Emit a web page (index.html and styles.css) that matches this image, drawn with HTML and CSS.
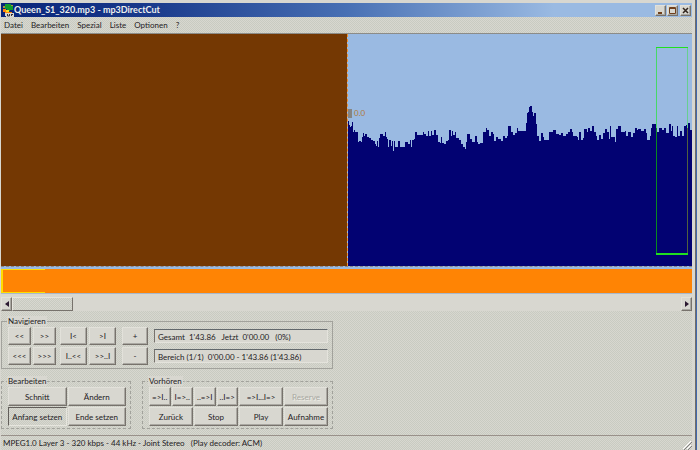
FILE: index.html
```html
<!DOCTYPE html>
<html lang="de">
<head>
<meta charset="utf-8">
<title>Queen_S1_320.mp3 - mp3DirectCut</title>
<link rel="stylesheet" href="styles.css">
</head>
<body>
<main class="window">
  <header class="titlebar">
    <svg class="app-icon" viewBox="0 0 12 13" aria-hidden="true">
      <path fill="#a89838" d="M1 2h2v2H1zM8 1h3v2H8z"/>
      <path fill="#119a2c" d="M3 0h6v2h2v4H8v1H5V5H3z"/>
      <path fill="#ff8410" d="M1 5h3v1h3v2h3v2H6V9H3V8H1z"/>
      <path fill="#f5e020" d="M4 6h3v2H4z"/>
      <path fill="#d6d6d0" d="M3 9h9v4H4v-1H3z"/>
      <path stroke="#303040" fill="none" d="M5.500 10v2h2v-2M9 10.500h2M9.500 10v2"/>
    </svg>
    <h1 class="title">Queen_S1_320.mp3 - mp3DirectCut</h1>
    <div class="caption">
      <button class="cap" aria-label="Minimieren"><svg viewBox="0 0 9 9"><path fill="#70401c" d="M2 6h4v2H2z"/></svg></button>
      <button class="cap" aria-label="Maximieren"><svg viewBox="0 0 9 9"><path fill="none" stroke="#70401c" d="M1.500 1.500h6v6h-6zM1 2.500h7"/></svg></button>
      <button class="cap close" aria-label="Schließen"><svg viewBox="0 0 9 9"><path fill="none" stroke="#30241c" stroke-width="1.500" d="M2 2l5 5M7 2l-5 5"/></svg></button>
    </div>
  </header>
  <nav class="menu">
    <a href="#">Datei</a><a href="#">Bearbeiten</a><a href="#">Spezial</a><a href="#">Liste</a><a href="#">Optionen</a><a href="#">?</a>
  </nav>
  <section class="wave">
    <div class="before"></div>
    <div class="after">
      <svg class="graph" viewBox="24 -168 1032 696" preserveAspectRatio="none" aria-hidden="true">
        <path d="M24 528V92H27V104H30V110H33V107H36V97H39V125H42V120H45V125H54V155H57V152H63V155H66V140H69V128H72V137H75V133H81V140H87V143H93V150H99V152H105V163H108V168H111V154H114V170H117V145H120V133H129V137H134V126H138V140H142V147H145V170H148V150H154V168H157V152H159V184H163V153H166V172H175V154H180V170H188V172H194V155H205V163H209V150H212V172H215V150H222V148H224V126H231V134H240V136H248V125H252V132H258V137H264V124H267V137H273V123H277V134H283V120H288V134H294V155H300V158H304V140H307V158H313V162H317V152H325V150H328V121H333V137H336V123H339V134H345V127H348V145H357V150H363V163H368V171H374V178H378V155H382V133H390V146H397V157H405V138H411V157H415V163H420V160H428V173H430V127H438V115H441V121H447V137H453V125H458V133H463V152H468V140H475V148H482V153H488V138H496V145H501V138H505V107H513V528Z"/>
        <path transform="translate(510)" d="M0 528V108H3V126H9V134H16V128H21V114H24V123H48V98H51V70H54V65H57V52H61V49H65V65H69V78H73V70H78V102H81V137H87V154H93V128H98V142H103V150H117V126H129V120H138V132H148V134H154V128H158V137H168V133H174V125H180V116H186V125H190V137H200V142H205V150H208V126H213V150H219V145H221V118H230V125H235V114H240V122H246V109H252V125H258V137H262V150H268V134H272V148H279V130H286V118H292V125H296V148H300V107H304V140H315V157H318V118H325V108H333V126H345V122H348V138H355V125H363V142H369V128H374V115H380V120H385V117H392V122H402V116H407V128H412V150H419V137H422V115H427V103H438V126H447V115H456V120H461V115H467V128H475V130H478V102H482V122H486V107H490V137H496V142H501V108H504V137H510V123H517V137H522V107H529V104H534V98H540V120H546V528Z"/>
      </svg>
      <div class="marker"><i></i><span>0.0</span></div>
      <div class="zone"></div>
    </div>
  </section>
  <div class="divider"></div>
  <section class="overview"><div class="view"></div></section>
  <div class="scrollbar">
    <button class="arrow" aria-label="Nach links"><svg viewBox="0 0 4 6"><path d="M4 0v6L0 3z"/></svg></button>
    <div class="thumb"></div>
    <button class="arrow end" aria-label="Nach rechts"><svg viewBox="0 0 4 6"><path d="M0 0v6l4-3z"/></svg></button>
  </div>
  <section class="controls">
    <fieldset class="navigate">
      <legend>Navigieren</legend>
      <div class="keys">
        <button>&lt;&lt;</button><button>&gt;&gt;</button><button class="gap-s">I&lt;</button><button>&gt;I</button><button class="gap-m">+</button>
        <button>&lt;&lt;&lt;</button><button>&gt;&gt;&gt;</button><button class="gap-s">I..&lt;&lt;</button><button>&gt;&gt;..I</button><button class="gap-m">-</button>
      </div>
      <div class="readouts">
        <output>Gesamt&nbsp; 1'43.86&nbsp;&nbsp; Jetzt&nbsp; 0'00.00&nbsp;&nbsp; (0%)</output>
        <output>Bereich (1/1)&nbsp; 0'00.00 - 1'43.86 (1'43.86)</output>
      </div>
    </fieldset>
    <div class="groups">
      <fieldset class="edit">
        <legend>Bearbeiten</legend>
        <div class="pair">
          <button>Schnitt</button><button>Ändern</button>
          <button class="pressed">Anfang setzen</button><button>Ende setzen</button>
        </div>
      </fieldset>
      <fieldset class="preview">
        <legend>Vorhören</legend>
        <div class="play">
          <button>=&gt;I..</button><button>I=&gt;..</button><button>..=&gt;I</button><button>..I=&gt;</button><button class="wide">=&gt;I...I=&gt;</button><button class="wide" disabled>Reserve</button>
          <button class="wide">Zurück</button><button class="wide">Stop</button><button class="wide">Play</button><button class="wide">Aufnahme</button>
        </div>
      </fieldset>
    </div>
  </section>
  <footer class="status">
    <span>MPEG1.0 Layer 3 - 320 kbps - 44 kHz - Joint Stereo&nbsp;&nbsp; (Play decoder: ACM)</span>
    <svg class="grip" viewBox="0 0 9 9" aria-hidden="true"><path stroke="#fff" d="M0 8l8-8M4 8l4-4"/><path stroke="#808080" d="M1 9l8-8M5 9l4-4"/></svg>
  </footer>
</main>
<aside class="backdrop"></aside>
</body>
</html>
```
FILE: styles.css
```css
* { box-sizing: border-box; }

:root {
  --face: #d8d7d0;
  --dither: repeating-conic-gradient(#d8d7d0 0 25%, #c8cbc1 0 50%) 0 0 / 2px 2px;
  --sky: #9abae2;
  --navy: #020272;
}

body {
  margin: 0;
  min-height: 100vh;
  display: flex;
  background: var(--face);
  color: #24211e;
  font: 8px/10px Lato, "Liberation Sans", sans-serif;
}

button {
  display: flex;
  align-items: center;
  justify-content: center;
  min-width: 0;
  padding: 0;
  border: 1px solid;
  border-color: #e2e1da #77726c #77726c #e2e1da;
  box-shadow: inset -1px -1px #aaa8a2;
  background: var(--face);
  color: inherit;
  font: inherit;
  white-space: nowrap;
}

.window {
  flex: 1;
  min-width: 0;
  display: flex;
  flex-direction: column;
  padding: 3px 3px 0 1px;
}

.backdrop {
  width: 5px;
  border-left: 1px solid #706c68;
  background: linear-gradient(90deg, #4268ac 1px, #d8d7d0 1px);
}

.titlebar {
  display: flex;
  align-items: center;
  height: 14px;
  padding: 0 1px;
  background: linear-gradient(90deg, #08247a 0, #18388a 20%, #4870b4 50%, var(--sky) 80%);
}

.app-icon { width: 12px; height: 13px; }

.title {
  flex: 1;
  margin: 0;
  color: #eef0ee;
  font: bold 9px/14px Lato, "Liberation Sans", sans-serif;
}

.caption { display: flex; gap: 1px; }
.cap { width: 11px; height: 11px; }
.cap svg { width: 9px; height: 9px; }
.close { margin-left: 1px; }

.menu {
  display: flex;
  gap: 8px;
  height: 17px;
  padding: 0 3px;
  border-bottom: 1px solid #8c8c88;
  background: var(--dither);
  line-height: 16px;
}
.menu a { color: inherit; text-decoration: none; }

.wave { flex: 1; min-height: 160px; display: flex; }
.before { flex: 346; background: #743803; }
.after {
  flex: 344;
  position: relative;
  min-width: 0;
  background: var(--sky);
  border-left: 1px dashed #f09030;
}
.graph { display: block; position: absolute; width: 100%; height: 100%; fill: var(--navy); shape-rendering: crispEdges; }

.marker { position: absolute; top: 32%; left: 0; display: flex; align-items: center; gap: 2px; color: #b07838; }
.marker i { width: 4px; height: 9px; background: #858584; }

.zone {
  position: absolute;
  top: 13px;
  right: 4px;
  bottom: 11px;
  width: 32px;
  border: solid #20e020;
  border-width: 1px 0 2px;
  background:
    linear-gradient(#48d868 39%, #088820 39%) 0 0 / 1px 100% no-repeat,
    linear-gradient(#68cf90 39%, #506040 39%) 100% 0 / 1px 100% no-repeat;
}

.divider {
  height: 3px;
  border-top: 1px dashed #88888c;
  background: var(--sky);
}
.overview { height: 25px; background: #ff8404; border-bottom: 1px solid #a8b8cc; }
.view { width: 44px; height: 24px; border: 1px solid #ffdc00; border-width: 1px 0 1px 2px; }

.scrollbar { display: flex; height: 14px; margin-top: 3px; }
.scrollbar .arrow { width: 11px; }
.arrow svg { width: 4px; height: 6px; fill: #2c1830; }
.thumb {
  width: 61px;
  border: 1px solid;
  border-color: #e6e5de #77726c #77726c #e6e5de;
  background: var(--dither);
}
.end { margin-left: auto; }

.controls {
  display: flex;
  flex-direction: column;
  align-items: flex-start;
  gap: 7px;
  padding: 5px 0 6px;
  background: var(--dither);
}

fieldset {
  min-width: 0;
  margin: 0;
  padding: 1px 4px 2px 6px;
  border: 1px solid #a2a29c;
}
legend { padding: 0 1px; margin-left: -1px; background: var(--face); }

.navigate { display: flex; width: 332px; gap: 6px; padding-bottom: 3px; }
.keys { display: grid; grid-template-columns: 23px 23px 29px 27px 30px; gap: 2px; grid-auto-rows: 18px; }
.gap-s { margin-left: 2px; }
.gap-m { margin-left: 4px; }
.readouts { flex: 1; display: flex; flex-direction: column; gap: 6px; padding: 2px 0; }
output {
  height: 14px;
  padding-left: 3px;
  border: 1px solid;
  border-color: #62686c #e4e3dc #e4e3dc #77726c;
  background: var(--face);
  line-height: 14px;
  white-space: nowrap;
}

.groups { display: flex; gap: 11px; }
.edit, .preview { border-style: dashed; }
.edit { width: 130px; }
.pair, .play { display: grid; gap: 1px; grid-auto-rows: 19px; }
.pair { grid-template-columns: 1fr 1fr; }
.preview { width: 191px; }
.play { grid-template-columns: repeat(8, 1fr); }
.wide { grid-column: span 2; }
.pressed { border-color: #625e5a #e6e5de #e6e5de #625e5a; box-shadow: none; background: var(--dither); }
button:disabled { color: #a8a8a2; text-shadow: 1px 1px #eeede6; }

.status {
  display: flex;
  justify-content: space-between;
  align-items: flex-end;
  height: 15px;
  padding-left: 2px;
  border-top: 1px solid #99918a;
  background: var(--dither);
  line-height: 14px;
}
.grip { width: 9px; height: 9px; }
```
